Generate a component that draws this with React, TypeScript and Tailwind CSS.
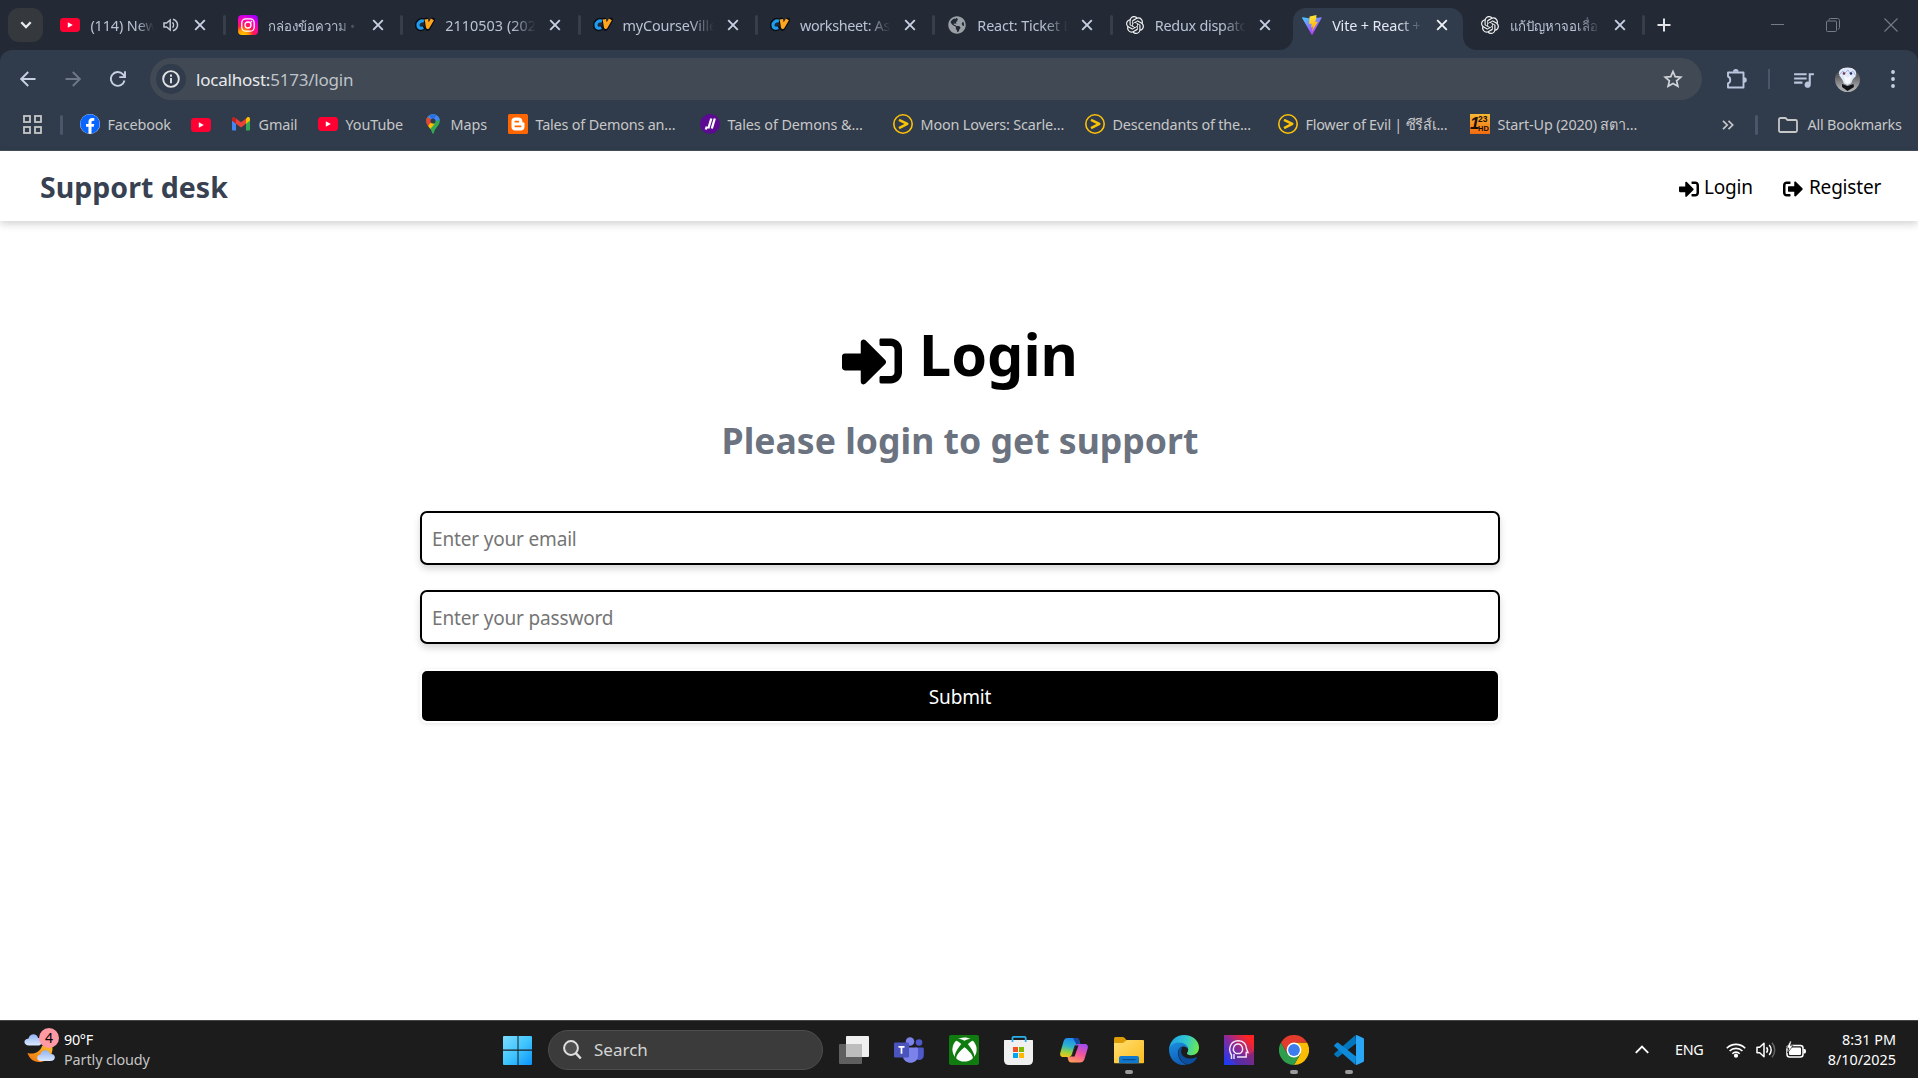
import React from "react";
import { FaFacebook, FaSignInAlt, FaSignOutAlt, FaGlobeAmericas, FaXbox } from "react-icons/fa";
import { SiOpenai } from "react-icons/si";
import { MdQueueMusic } from "react-icons/md";

const YouTubeIcon = () => (
  <svg width="20" height="20" viewBox="0 0 20 20" className="shrink-0">
    <rect x="0" y="3" width="20" height="14" rx="3.4" fill="#ff0033" />
    <path d="M7.8 7.2v5.6l5-2.8z" fill="#fff" />
  </svg>
);

const InstagramIcon = () => (
  <svg width="20" height="20" viewBox="0 0 20 20" className="shrink-0">
    <defs>
      <radialGradient id="ig" cx="0.25" cy="1.05" r="1.15">
        <stop offset="0" stopColor="#ffd600" />
        <stop offset="0.25" stopColor="#ff9a00" />
        <stop offset="0.45" stopColor="#ff1a4b" />
        <stop offset="0.72" stopColor="#ff00b8" />
        <stop offset="1" stopColor="#a200ff" />
      </radialGradient>
    </defs>
    <rect width="20" height="20" rx="4" fill="url(#ig)" />
    <rect x="3.8" y="3.8" width="12.4" height="12.4" rx="4" fill="none" stroke="#fff" strokeWidth="1.3" />
    <circle cx="10" cy="10" r="3" fill="none" stroke="#fff" strokeWidth="1.3" />
    <circle cx="13.4" cy="6.6" r="0.9" fill="#fff" />
  </svg>
);

const CvIcon = () => (
  <svg width="20" height="20" viewBox="0 0 20 20" className="shrink-0">
    <g fill="none" strokeLinejoin="round">
      <path d="M8.6 5.6C5 4.6 2.4 7 2.3 10.3c0 2.8 2.6 4 5.2 2.9M11.2 5l1.4 8.6L17.6 5" stroke="#0c0f14" strokeWidth="5" strokeLinecap="round" />
      <path d="M9 6.200C5.800 5 3 7.300 3 10.300c0 2.700 2.600 3.600 5.200 2.300" stroke="#1e9df1" strokeWidth="3.200" />
      <path d="M11.400 4.300l1.300 8L17.400 4.300" stroke="#ffa51e" strokeWidth="3.500" />
    </g>
  </svg>
);

const GlobeIcon = () => <FaGlobeAmericas size={18} color="#9aa0a6" className="shrink-0" />;
const OpenAiIcon = () => <SiOpenai size={18} color="#f1f1f1" className="shrink-0" />;

const ViteIcon = () => (
  <svg width="20" height="20" viewBox="0 0 20 20" className="shrink-0">
    <defs>
      <linearGradient id="va" x1="0" y1="0" x2="0.6" y2="1">
        <stop offset="0" stopColor="#41d1ff" />
        <stop offset="1" stopColor="#bd34fe" />
      </linearGradient>
      <linearGradient id="vb" x1="0.4" y1="0" x2="0.6" y2="1">
        <stop offset="0" stopColor="#ffea3a" />
        <stop offset="1" stopColor="#ffa200" />
      </linearGradient>
    </defs>
    <path d="M19.6 2.9L10.5 19.5c-.2.3-.7.3-.9 0L.1 2.9c-.2-.4.1-.8.5-.7L10 3.8l9.1-1.6c.4-.1.7.3.5.7z" fill="url(#va)" />
    <path d="M14.5.1L7.8 1.4c-.1 0-.2.1-.2.2l-.4 7.2c0 .2.1.3.3.3l1.9-.4c.2 0 .3.1.3.3L9.1 11.9c0 .2.1.4.3.3l1.2-.4c.2 0 .4.1.3.3l-.9 4.4 5.7-9.4c.1-.2 0-.4-.3-.4l-1.9.4c-.2 0-.4-.1-.3-.3l1.3-4.400c.1-.2-.1-.3-.3-.3z" fill="url(#vb)" />
  </svg>
);

const Cross = ({ color }: { color: string }) => (
  <svg width="12" height="12" viewBox="0 0 12 12" className="shrink-0">
    <path d="M1.2 1.2l9.6 9.6M10.8 1.2L1.2 10.8" stroke={color} strokeWidth="1.9" />
  </svg>
);

const TabSound = () => (
  <svg width="16" height="14" viewBox="0 0 16 14" fill="none" stroke="#c3c9d3" strokeWidth="1.5" className="mr-[17px] shrink-0">
    <path d="M1 5h2.600l3.600-3v10l-3.600-3H1zM9.500 4.400c1.400 1.400 1.400 3.800 0 5.200M10 1.300c6 2 6 9.400 0 11.400" />
  </svg>
);

type TabData = { icon: React.ReactNode; title: string; cls: string; active?: boolean; sound?: boolean; sep?: boolean };

const tabs: TabData[] = [
  { icon: <YouTubeIcon />, title: "(114) New", cls: "text-[14.4px] tracking-[-0.1px]", sound: true, sep: true },
  { icon: <InstagramIcon />, title: "กล่องข้อความ •", cls: "text-[13.2px]", sep: true },
  { icon: <CvIcon />, title: "2110503 (202", cls: "text-[14.4px] tracking-[0.05px]", sep: true },
  { icon: <CvIcon />, title: "myCourseVille", cls: "text-[14.4px] tracking-[-0.15px]", sep: true },
  { icon: <CvIcon />, title: "worksheet: As", cls: "text-[14.4px] tracking-[-0.35px]", sep: true },
  { icon: <GlobeIcon />, title: "React: Ticket L", cls: "text-[14.4px] tracking-[-0.15px]", sep: true },
  { icon: <OpenAiIcon />, title: "Redux dispatc", cls: "text-[14.4px] tracking-[-0.25px]" },
  { icon: <ViteIcon />, title: "Vite + React +", cls: "text-[14.4px] tracking-[-0.15px]", active: true },
  { icon: <OpenAiIcon />, title: "แก้ปัญหาจอเลื่อ", cls: "text-[13.2px]", sep: true },
];

const Flare = ({ flip }: { flip?: boolean }) => (
  <svg width="14" height="14" viewBox="0 0 14 14" className={flip ? "absolute bottom-0 -right-[14px] -scale-x-100" : "absolute bottom-0 -left-[14px]"}>
    <path d="M14 0v14H0C8 14 14 8 14 0z" fill="#303b4b" />
  </svg>
);

const Tab = ({ t }: { t: TabData }) => (
  <div className="relative flex h-full w-[177.4px] shrink-0 items-center">
    {t.active && (
      <div className="absolute top-[8px] bottom-0 left-[5px] w-[170px] rounded-t-[13px] bg-[#303b4b]">
        <Flare />
        <Flare flip />
      </div>
    )}
    <div className="relative flex w-full items-center pl-[14px]">
      <span className="flex w-[20px] justify-center">{t.icon}</span>
      <span
        className={`ml-[10px] block min-w-0 overflow-hidden pt-px leading-[24px] whitespace-nowrap ${t.sound ? "mr-[9px] w-[64px]" : "mr-[13px] w-[91px]"} [mask-image:linear-gradient(to_right,#000_74%,transparent)] ${t.active ? "text-[#e3e8f2]" : "text-[#b9c3d6]"} ${t.cls}`}
      >
        {t.title}
      </span>
      {t.sound ? (
        <span className="-mr-[2px] flex">
          <TabSound />
        </span>
      ) : null}
      <Cross color={t.active ? "#eef1f6" : "#c6d0e2"} />
    </div>
    {t.sep && <span className="absolute right-[-2px] h-[20px] w-[3px] rounded-full bg-[#383f4a]" />}
  </div>
);

const TabStrip = () => (
  <div className="flex h-[50px] items-center bg-[#232a35]">
    <div className="ml-[8px] flex h-[34px] w-[35px] items-center justify-center rounded-[11px] bg-[#35393d]">
      <svg width="12" height="8" viewBox="0 0 12 8">
        <path d="M1.3 1.3L6 6l4.7-4.7" fill="none" stroke="#e8eaed" strokeWidth="2.3" />
      </svg>
    </div>
    <div className="ml-[3.4px] flex h-full">
      {tabs.map((t) => (
        <Tab key={t.title} t={t} />
      ))}
    </div>
    <svg width="14" height="14" viewBox="0 0 14 14" className="ml-[14.5px]">
      <path d="M7 .5v13M.5 7h13" stroke="#e2e4e8" strokeWidth="2" />
    </svg>
    <div className="ml-auto flex items-center pr-[20px]">
      <svg width="13" height="13" viewBox="0 0 13 13">
        <path d="M0 5.500h13" stroke="#777c84" />
      </svg>
      <svg width="14" height="14" viewBox="0 0 14 14" fill="none" stroke="#777c84" className="ml-[42px]">
        <rect x="0.5" y="3" width="10" height="10.5" rx="1" />
        <path d="M3 2.500V1.800C3 1 3.500.5 4.200.5h7.300c1.200 0 2 .8 2 2v7c0 .8-.5 1.500-1.500 1.500" />
      </svg>
      <svg width="14" height="14" viewBox="0 0 14 14" className="ml-[44px]">
        <path d="M.5.5l13 13M13.500.5L.5 13.500" stroke="#777c84" strokeWidth="1.1" />
      </svg>
    </div>
  </div>
);

const Avatar = () => (
  <svg width="25" height="25" viewBox="0 0 25 25">
    <defs>
      <clipPath id="av">
        <circle cx="12.5" cy="12.5" r="12.5" />
      </clipPath>
      <linearGradient id="avbg" x1="0" y1="0" x2="0" y2="1">
        <stop offset="0" stopColor="#26292d" />
        <stop offset="1" stopColor="#c0c0c0" />
      </linearGradient>
    </defs>
    <g clipPath="url(#av)">
      <rect width="25" height="25" fill="url(#avbg)" />
      <path d="M6 18h13l3 7H4z" fill="#a9aaac" />
      <path d="M7 17l5.500 2 6-2 .5 3-6.500 4L7 20z" fill="#111316" />
      <path d="M4 8c-1-6 4-7.500 8.500-7.500S22.500 2 21 9L18 12l-2 4.500-3.500 1.500L9 16.500 7.500 13z" fill="#dfe7f9" />
      <path d="M9 8l3.500 3L16 8l-1 7-2.500 2L10 15z" fill="#f6f7fb" />
      <path d="M4 8l4-4 1 3 4-4 2 3 3-2 3 5" fill="none" stroke="#a3b4dc" />
      <circle cx="9" cy="6.5" r="1.3" fill="#7b2e4a" />
      <circle cx="16" cy="6.5" r="1.3" fill="#252f66" />
    </g>
  </svg>
);

const Toolbar = () => (
  <div className="bg-[#232a35]">
    <div className="flex h-[54px] items-center rounded-t-[12px] bg-[#303b4b] pt-[4px]">
      <svg width="16" height="16" viewBox="0 0 16 16" fill="none" stroke="#c6d0e2" strokeWidth="1.9" className="ml-[20px]">
        <path d="M15.500 8H1.500M8.200 1L1.200 8l7 7" />
      </svg>
      <svg width="16" height="16" viewBox="0 0 16 16" fill="none" stroke="#6d7787" strokeWidth="1.9" className="ml-[29px]">
        <path d="M.5 8h14M7.800 1l7 7-7 7" />
      </svg>
      <svg width="16" height="16" viewBox="0 0 16 16" fill="none" stroke="#c6d0e2" strokeWidth="1.9" className="ml-[29px]">
        <path d="M14.500 9.500A6.900 6.900 0 1 1 13 3.400l1.300 1.500M15 .3v5.800H9.300" />
      </svg>
      <div className="ml-[24px] flex h-[42px] w-[1552px] items-center rounded-full bg-[#404954] pl-[6px]">
        <div className="flex size-[30px] items-center justify-center rounded-full bg-[#303b4b]">
          <svg width="18" height="18" viewBox="0 0 17 17" fill="none" stroke="#e3e3e3" strokeWidth="1.8">
            <circle cx="8.5" cy="8.5" r="7.4" />
            <path d="M8.500 7.500v5M8.500 4.300v2" />
          </svg>
        </div>
        <span className="ml-[10px] pt-px text-[17px] leading-[30px] tracking-[-0.22px] text-[#bfc3c9]">
          <span className="text-[#e8eaed]">localhost:</span>5173/login
        </span>
        <svg width="20" height="20" viewBox="0 0 20 20" fill="none" stroke="#d0d3d8" strokeWidth="1.7" className="mr-[19.5px] ml-auto">
          <path d="M10 2.500l2.200 5.100 5.600.5-4.200 3.700 1.300 5.500-4.900-2.900-4.900 2.900 1.300-5.500L2.200 8.100l5.600-.5z" />
        </svg>
      </div>
      <svg width="22" height="21" viewBox="0 0 22 21" fill="none" stroke="#b9c6de" strokeWidth="1.9" className="ml-[24px]">
        <path d="M2 3.500h15.500v15H2v-4c3-1 3-6 0-7z" strokeLinejoin="round" />
        <path d="M7 2.800a2.800 2.800 0 0 1 5.600 0M18 8.200a2.800 2.800 0 0 1 0 5.600" fill="#b9c6de" stroke="none" />
      </svg>
      <span className="ml-[20px] h-[20px] w-[2px] bg-[#4a566a]" />
      <MdQueueMusic size={25} color="#b9c6de" className="ml-[21px]" />
      <span className="ml-[19px]">
        <Avatar />
      </span>
      <svg width="4" height="18" viewBox="0 0 4 18" fill="#c6d0e2" className="ml-[30.500px]">
        <circle cx="2" cy="2" r="1.9" />
        <circle cx="2" cy="9" r="1.9" />
        <circle cx="2" cy="16" r="1.9" />
      </svg>
    </div>
  </div>
);

const GmailIcon = () => (
  <svg width="20" height="20" viewBox="0 0 20 20">
    <path d="M1 5v10.300c0 .8.5 1.200 1.200 1.200H5V9z" fill="#4285f4" />
    <path d="M19 5v10.300c0 .8-.5 1.200-1.200 1.200H15V9z" fill="#34a853" />
    <path d="M15 4.500V9.700l4-3V5c0-2-2-2.500-3-1.500z" fill="#fbbc04" />
    <path d="M5 9.700V4.500L10 8.200l5-3.700v5.200l-5 3.700z" fill="#ea4335" />
    <path d="M1 5v1.700l4 3V4.500L4 3.500C3 2.500 1 3 1 5z" fill="#c5221f" />
  </svg>
);

const MapsIcon = () => (
  <svg width="20" height="20" viewBox="0 0 20 20">
    <defs>
      <clipPath id="pin">
        <path d="M10 .3c-3.900 0-6.800 3-6.800 6.700 0 4.600 4.600 6.300 6 12 .2.900 1.400.9 1.600 0 1.400-5.700 6-7.400 6-12 0-3.700-2.900-6.700-6.800-6.700z" />
      </clipPath>
    </defs>
    <g clipPath="url(#pin)">
      <rect width="20" height="20" fill="#34a853" />
      <path d="M0 0h20v6L10 7 4.500 2.500z" fill="#4285f4" />
      <path d="M0 0l10 7-6 7H0z" fill="#ea4335" />
      <path d="M14 0h-9l5 6z" fill="#2b6fe0" />
      <path d="M4 13l4-4.500 3.500 1.500-5 6z" fill="#fbbc04" />
    </g>
    <circle cx="10" cy="7" r="2.5" fill="#303b4b" />
  </svg>
);

const BloggerIcon = () => (
  <svg width="20" height="20" viewBox="0 0 20 20">
    <rect width="20" height="20" rx="1.5" fill="#ff6600" />
    <path d="M7 3.500h3.500c2.300 0 3.800 1.400 3.800 3.500 0 1.300.3 1.500 1.200 1.500.7 0 1 .4 1 1V13c0 2-1.500 3.500-3.500 3.500H7c-2 0-3.500-1.500-3.500-3.500V7C3.500 5 5 3.500 7 3.500z" fill="#fff" />
    <path d="M7.300 7.700h3M7.300 12.300h5.400" stroke="#ff6600" strokeWidth="1.7" strokeLinecap="round" />
  </svg>
);

const PurpleIcon = () => (
  <svg width="20" height="20" viewBox="0 0 20 20">
    <circle cx="10" cy="10" r="10" fill="#5b0a91" />
    <path d="M11.300 4.500L8.300 14.500M14.800 4.500L11.800 14.500M6.800 12.500l-1 3" stroke="#fff" strokeWidth="2.300" fill="none" />
  </svg>
);

const ViuIcon = () => (
  <svg width="20" height="20" viewBox="0 0 20 20" fill="none" stroke="#fbc108">
    <circle cx="10" cy="10" r="9.2" strokeWidth="1.6" />
    <path d="M6 5.800l8.300 4-8.300 4.400" strokeWidth="2.6" strokeLinejoin="round" />
  </svg>
);

const HdIcon = () => (
  <span className="flex size-[20px] overflow-hidden bg-linear-to-b from-[#f7b733] to-[#f06a10] font-['Liberation_Sans'] font-bold text-[#1a0d02]">
    <span className="w-[8px] text-[17px] leading-[20px] italic">1</span>
    <span className="flex w-[12px] flex-col pt-[1px] text-[8.500px] leading-[9px]">
      <span>23</span>
      <span className="text-[7.500px]">HD</span>
    </span>
  </span>
);

const Facebook = () => (
  <span className="block rounded-full bg-white">
    <FaFacebook size={20} color="#0866ff" />
  </span>
);

const bookmarks = [
  { icon: <Facebook />, label: "Facebook", w: "w-[111px]", t: "tracking-[-0.15px]" },
  { icon: <YouTubeIcon />, label: "", w: "w-[40px]", t: "" },
  { icon: <GmailIcon />, label: "Gmail", w: "w-[87px]", t: "tracking-[-0.1px]" },
  { icon: <YouTubeIcon />, label: "YouTube", w: "w-[105px]", t: "tracking-[-0.1px]" },
  { icon: <MapsIcon />, label: "Maps", w: "w-[85px]", t: "tracking-[-0.1px]" },
  { icon: <BloggerIcon />, label: "Tales of Demons an...", w: "w-[192px]", t: "tracking-[-0.18px]" },
  { icon: <PurpleIcon />, label: "Tales of Demons &...", w: "w-[193px]", t: "tracking-[-0.1px]" },
  { icon: <ViuIcon />, label: "Moon Lovers: Scarle...", w: "w-[192px]", t: "tracking-[-0.16px]" },
  { icon: <ViuIcon />, label: "Descendants of the...", w: "w-[193px]", t: "tracking-[-0.18px]" },
  { icon: <ViuIcon />, label: "Flower of Evil | ซีรีส์เ...", w: "w-[192px]", t: "tracking-[-0.25px]" },
  { icon: <HdIcon />, label: "Start-Up (2020) สตา...", w: "w-[200px]", t: "tracking-[-0.15px]" },
];

const BookmarksBar = () => (
  <div className="flex h-[47px] items-center border-b border-[#474f5b] bg-[#303b4b] pb-[5px] text-[14.4px] text-[#c7c7c7]">
    <svg width="19" height="19" viewBox="0 0 19 19" fill="none" stroke="#c7c7c7" strokeWidth="1.8" className="ml-[23px]">
      <rect x="1" y="1" width="6" height="6" />
      <rect x="12" y="1" width="6" height="6" />
      <rect x="1" y="12" width="6" height="6" />
      <rect x="12" y="12" width="6" height="6" />
    </svg>
    <span className="mr-[17px] ml-[18px] h-[20px] w-[3px] rounded-full bg-[#4a566a]" />
    {bookmarks.map((b, i) => (
      <div key={i} className={`flex shrink-0 items-center gap-[7.5px] whitespace-nowrap ${b.w}`}>
        <span className="w-[20px] shrink-0">{b.icon}</span>
        <span className={b.t}>{b.label}</span>
      </div>
    ))}
    <svg width="12" height="10" viewBox="0 0 12 10" fill="none" stroke="#c7c7c7" strokeWidth="1.7" className="ml-auto">
      <path d="M1 .8L5.200 5 1 9.200M6.500.8L10.700 5 6.500 9.200" />
    </svg>
    <span className="ml-[21px] h-[20px] w-[3px] rounded-full bg-[#4a566a]" />
    <svg width="20" height="16" viewBox="0 0 20 16" fill="none" stroke="#c7c7c7" strokeWidth="1.8" strokeLinejoin="round" className="ml-[20px]">
      <path d="M1 13.500V2.500C1 1.600 1.600 1 2.500 1H7.500l2 2h8c.9 0 1.500.6 1.500 1.500v9c0 .9-.6 1.500-1.500 1.500h-15C1.600 15 1 14.400 1 13.500z" />
    </svg>
    <span className="mr-[15.500px] ml-[10px] w-[95px] whitespace-nowrap tracking-[-0.2px]">All Bookmarks</span>
  </div>
);

const LoginPage = () => (
  <div className="flex flex-1 flex-col bg-white text-black">
    <header className="flex h-[70px] items-center justify-between bg-white pr-[38px] pl-[40px] shadow-[0_3px_8px_rgba(0,0,0,0.18)]">
      <span className="pt-[3px] text-[28.5px] font-bold tracking-[0.02px] whitespace-nowrap text-[#374151]">Support desk</span>
      <nav className="flex items-center text-[19px] tracking-[-0.2px] whitespace-nowrap">
        <span className="flex items-center">
          <FaSignInAlt size={20} className="mt-[6px] mr-[5px]" />
          <span className="w-[50px] pt-[2px]">Login</span>
        </span>
        <span className="ml-[29px] flex items-center">
          <FaSignOutAlt size={20} className="mt-[6px] mr-[6px]" />
          <span className="w-[71px] pt-[2px]">Register</span>
        </span>
      </nav>
    </header>
    <main className="ml-[420px] flex w-[1080px] flex-col">
      <h1 className="mt-[93px] flex h-[80px] items-center justify-center text-[57.5px] font-bold whitespace-nowrap">
        <FaSignInAlt size={60} className="mt-[13px] mr-[17px]" />
        <span>Login</span>
      </h1>
      <p className="mt-[21px] h-[50px] text-center text-[35.6px] leading-[51px] font-bold whitespace-nowrap text-[#6b7280]">
        Please login to get support
      </p>
      <form className="mt-[46px] flex flex-col text-[19px] tracking-[-0.17px]">
        <input
          placeholder="Enter your email"
          className="h-[54px] rounded-[7px] border-2 border-black px-[10px] pt-[2px] shadow-[0_4px_7px_rgba(0,0,0,0.16)] placeholder:text-[#757575]"
        />
        <input
          placeholder="Enter your password"
          className="mt-[25px] h-[54px] rounded-[7px] border-2 border-black px-[10px] pt-[2px] shadow-[0_4px_7px_rgba(0,0,0,0.16)] placeholder:text-[#757575]"
        />
        <button type="button" className="mt-[25px] h-[54px] rounded-[7px] border-2 border-white bg-black pt-[2px] text-white shadow-[0_1px_4px_rgba(0,0,0,0.1)]">
          Submit
        </button>
      </form>
    </main>
  </div>
);

const Weather = () => (
  <div className="relative h-[36px] w-[35px]">
    <svg width="35" height="36" viewBox="0 0 35 36">
      <defs>
        <linearGradient id="cl" x1="0" y1="0" x2="0" y2="1">
          <stop offset="0" stopColor="#8fb4f3" />
          <stop offset="1" stopColor="#dce8fd" />
        </linearGradient>
        <linearGradient id="mn" x1="1" y1="0" x2="0" y2="1">
          <stop offset="0" stopColor="#fbc02d" />
          <stop offset="1" stopColor="#f0700e" />
        </linearGradient>
      </defs>
      <path d="M28 17c2 7-2 17-13 17C9 34 5 30 3.500 25 10 27 16 24 18 18z" fill="url(#mn)" />
      <path d="M5 17.500c-6 0-6-6.500-.5-7C6 5 13 5 14 10c4-1 5 7.500 1 7.500z" fill="url(#cl)" />
      <path d="M17 33c-5 0-5-6-.5-6.500C18 21 25 21 26 26c6-1 7 7 0 7z" fill="url(#cl)" />
    </svg>
    <span className="absolute top-0 left-[15px] size-[20px] rounded-full bg-[#ff99a4] text-center text-[14px] leading-[20px] text-black">4</span>
  </div>
);

const WindowsLogo = () => (
  <svg width="30" height="30" viewBox="0 0 30 30">
    <defs>
      <linearGradient id="win" gradientUnits="userSpaceOnUse" x1="0" y1="0" x2="30" y2="30">
        <stop offset="0" stopColor="#7fdcff" />
        <stop offset="0.5" stopColor="#41c6ff" />
        <stop offset="1" stopColor="#0a93f8" />
      </linearGradient>
    </defs>
    <path d="M1 1h13.500v13.500H0V2q0-1 1-1zM15.500 1H28q1 0 1 1v12.500H15.500zM0 15.700h14.500V30H1q-1 0-1-1zM15.500 15.700H29V29q0 1-1 1H15.500z" fill="url(#win)" />
  </svg>
);

const TaskView = () => (
  <svg width="30" height="30" viewBox="0 0 30 30">
    <rect x="0" y="9" width="23" height="20" rx="1" fill="#5f5f5f" />
    <rect x="7" y="1" width="23" height="21" rx="1" fill="#f0f0f0" />
    <path d="M7 9h16v13H8q-1 0-1-1z" fill="#bdbdbd" />
  </svg>
);

const Teams = () => (
  <svg width="30" height="30" viewBox="0 0 30 30">
    <circle cx="25" cy="7.5" r="3.3" fill="#5059c9" />
    <path d="M21 12.500h7.500q1.300 0 1.300 1.300v6c0 6-6 6-8 4z" fill="#5059c9" />
    <circle cx="16" cy="6.5" r="4.3" fill="#7b83eb" />
    <path d="M9 12.500h13.500q1.500 0 1.500 1.500v7c0 9-15 9-15 0z" fill="#7b83eb" />
    <rect x="0" y="7.5" width="15" height="15" rx="1.3" fill="#4b53bc" />
    <path d="M4.500 11.800h6M7.500 11.800v7" stroke="#fff" strokeWidth="1.7" />
  </svg>
);

const Xbox = () => (
  <span className="flex size-[30px] items-center justify-center rounded-[2px] bg-[#107c10]">
    <FaXbox size={25} color="#fff" />
  </span>
);

const Store = () => (
  <svg width="30" height="30" viewBox="0 0 30 30">
    <path d="M8.500 8V3q0-1.200 1.200-1.200h10.800q1.200 0 1.200 1.200V8" fill="none" stroke="#2bb0ea" strokeWidth="1.8" />
    <path d="M.5 5H28.500q.5 0 .5.500V25q0 5-5 5H5q-5 0-5-5V5.500q0-.5.500-.5z" fill="#f0f0f0" />
    <path d="M8.500 5v2M21.700 5v2" stroke="#2bb0ea" strokeWidth="1.8" />
    <path d="M9 12h5v5H9z" fill="#f25022" />
    <path d="M15 12h5v5h-5z" fill="#7fba00" />
    <path d="M9 18h5v5H9z" fill="#00a4ef" />
    <path d="M15 18h5v5h-5z" fill="#ffb900" />
  </svg>
);

const Copilot = () => (
  <svg width="30" height="30" viewBox="0 0 30 30">
    <defs>
      <linearGradient id="cpa" x1="0.5" y1="0" x2="0.3" y2="1">
        <stop offset="0" stopColor="#1b8bf0" />
        <stop offset="0.45" stopColor="#2fb5c8" />
        <stop offset="0.75" stopColor="#9bd13c" />
        <stop offset="1" stopColor="#f2c41c" />
      </linearGradient>
      <linearGradient id="cpb" x1="0.7" y1="0" x2="0.3" y2="1">
        <stop offset="0" stopColor="#a04df0" />
        <stop offset="0.5" stopColor="#f2559c" />
        <stop offset="1" stopColor="#ff9a5a" />
      </linearGradient>
    </defs>
    <path d="M8.500 3H17c2.500 0 3 1.500 3.500 3.500l1 3h-3c-2 0-3 1-3.500 3L13 19c-.7 2.500-2 3-4 3H4.500C1.500 22 .5 20 1.500 17L4.500 6.500C5.200 4 6.500 3 8.500 3z" fill="url(#cpa)" />
    <path d="M14 3h4c1.500 0 2 1.500 2.500 3.500l1 3h-4z" fill="#1746a8" />
    <path d="M21 27.500h-8.500c-2.500 0-3-1.500-3.500-3.500l-.6-2h2c2 0 2.600-1 3.100-3L16 12c.7-2.500 2-3 4-3h5.500c3 0 4 2 3 5L25.500 24c-.7 2.500-2.500 3.500-4.500 3.500z" fill="url(#cpb)" />
    <path d="M16.500 10.500h3l-4 11h-3z" fill="#1c1c1c" />
  </svg>
);

const Explorer = () => (
  <svg width="30" height="30" viewBox="0 0 30 30">
    <defs>
      <linearGradient id="fo" x1="0" y1="0" x2="1" y2="1">
        <stop offset="0" stopColor="#ffdf72" />
        <stop offset="1" stopColor="#fdbb1c" />
      </linearGradient>
    </defs>
    <path d="M0 3.500Q0 2 1.500 2h7.300q.8 0 1.400.6L12.500 5v6H0z" fill="#dd9c05" />
    <path d="M0 8h8.500q1 0 1.600-.7l1.500-1.600q.6-.7 1.600-.7H29q1 0 1 1v21.500q0 .8-.8.8H.8q-.8 0-.8-.8z" fill="url(#fo)" />
    <path d="M5 28.300V23q0-2 2-2h16q2 0 2 2v5.300z" fill="#0f78d0" />
    <path d="M9 24.700h12" stroke="#0a4f8c" strokeWidth="1.3" strokeLinecap="round" />
  </svg>
);

const Edge = () => (
  <svg width="30" height="30" viewBox="0 0 30 30">
    <defs>
      <linearGradient id="ea" x1="0" y1="0.3" x2="1" y2="0.5">
        <stop offset="0" stopColor="#1f9fe6" />
        <stop offset="0.55" stopColor="#33c8cf" />
        <stop offset="1" stopColor="#6be84e" />
      </linearGradient>
      <linearGradient id="eb" x1="0" y1="0" x2="0.3" y2="1">
        <stop offset="0" stopColor="#1b8fdf" />
        <stop offset="1" stopColor="#0f5fb8" />
      </linearGradient>
    </defs>
    <path d="M0 14.500C.5 6 7 0 15 0c9 0 15 6 15 12.500 0 5-3.500 7.700-7.500 7.700-3.500 0-4.500-1.200-4.500-2 0-.7 1.200-1.500 1.200-3.700 0-3-3.200-5.500-7.200-5.500-6 0-10 3-12 5.500z" fill="url(#ea)" />
    <path d="M0 14.500C1 10 5.500 7.500 10 7.500c5.500 0 9 3.300 9 6.500 0 0-1.500-2.500-5-2.500-3 0-5 3-5 6.500 0 6 5 11 9 11.500C8 32 0 24.500 0 14.500z" fill="url(#eb)" />
    <path d="M9.800 14.500C8 20 11.500 27.500 18.500 29.600c4-.7 7.500-3 9.300-6.600.3-.5-.2-.9-.7-.7-6 3-15 .7-15-5.800 0-2 .6-3.500 1.400-4.500-1.500.2-3 1-3.700 2.500z" fill="#0c4fa0" />
  </svg>
);

const HeadApp = () => (
  <svg width="30" height="30" viewBox="0 0 30 30">
    <defs>
      <linearGradient id="ha" x1="0" y1="1" x2="1" y2="0">
        <stop offset="0" stopColor="#0d3cff" />
        <stop offset="0.5" stopColor="#8a2a9a" />
        <stop offset="0.85" stopColor="#ff2424" />
        <stop offset="1" stopColor="#ff2424" />
      </linearGradient>
    </defs>
    <rect width="30" height="30" fill="url(#ha)" />
    <path d="M8 24l3-8 12 6 7-6v14H13z" fill="#552a88" opacity="0.5" />
    <g fill="none" stroke="#f4e8f6" strokeWidth="1.4">
      <path d="M7.500 24v-4c-4-6-1-14 6.500-14.200 6-.2 8.500 4 8.500 8l1.500 3.700h-1.800V22H13" />
      <path d="M10 24v-5M12 18.500c-5-3-2-9.500 2-9.500s7 6 2 9.500z" />
    </g>
  </svg>
);

const Chrome = () => (
  <svg width="30" height="30" viewBox="0 0 30 30">
    <path d="M28 7.500A15 15 0 0 1 15 30l6.500-11.200L15 7.500z" fill="#fbbc04" />
    <path d="M15 30A15 15 0 0 1 2 7.500l6.500 11.300L15 22l6.500-3.200z" fill="#2f9e4c" />
    <path d="M15 7.500h13A15 15 0 0 0 2 7.500l6.500 11z" fill="#e33b2e" />
    <circle cx="15" cy="15" r="7.4" fill="#fff" />
    <circle cx="15" cy="15" r="5.9" fill="#3b7ded" />
  </svg>
);

const VsCode = () => (
  <svg width="30" height="30" viewBox="0 0 30 30">
    <path d="M22 8.500L4.300 22q-.8.600-1.500 0L.6 20q-.9-.9 0-1.800L21.500 0z" fill="#0277bd" />
    <path d="M22 21.500L4.300 7.800q-.8-.6-1.500 0L.6 9.700q-.9.900 0 1.800L21.500 30z" fill="#0e8ad8" />
    <path d="M22 .3q.6-.4 1.200-.1l6 2.800q.8.400.8 1.200v21.600q0 .8-.8 1.200l-6 2.800q-.8.300-1.400-.2.200 0 .2-.8z" fill="#29a6f5" />
  </svg>
);

const apps = [
  { icon: <TaskView />, open: false },
  { icon: <Teams />, open: false },
  { icon: <Xbox />, open: false },
  { icon: <Store />, open: false },
  { icon: <Copilot />, open: false },
  { icon: <Explorer />, open: true },
  { icon: <Edge />, open: false },
  { icon: <HeadApp />, open: false },
  { icon: <Chrome />, open: true },
  { icon: <VsCode />, open: true },
];

const Taskbar = () => (
  <footer className="flex h-[58px] shrink-0 items-center border-t border-[#444747] bg-[#1c1c1c] text-[14.4px] whitespace-nowrap text-white">
    <div className="flex w-[502.5px] items-center pl-[24px]">
      <div className="mb-[8px]">
        <Weather />
      </div>
      <div className="ml-[5px] leading-[20px]">
        <div className="tracking-[-0.3px]">90°F</div>
        <div className="tracking-[-0.1px] text-[#c4c4c4]">Partly cloudy</div>
      </div>
    </div>
    <WindowsLogo />
    <div className="ml-[15.5px] flex h-[40px] w-[275px] items-center rounded-full border border-[#4d4d4d] bg-[#3b3b3b] pl-[14px]">
      <svg width="19" height="20" viewBox="0 0 19 20" fill="none" stroke="#e0e0e0">
        <circle cx="8" cy="8" r="6.9" strokeWidth="2" fill="#505050" />
        <path d="M12.800 13.200l5 5.300" strokeWidth="2.5" />
      </svg>
      <span className="ml-[12px] pt-px text-[17px] text-[#d4d4d4]">Search</span>
    </div>
    <div className="flex gap-[25px] pl-[16px]">
      {apps.map((a, i) => (
        <div key={i} className="relative size-[30px]">
          {a.icon}
          {a.open && <span className="absolute -bottom-[9px] left-[11px] h-[4px] w-[8px] rounded-full bg-[#9a9a9a]" />}
        </div>
      ))}
    </div>
    <div className="ml-auto flex items-center pr-[22px]">
      <svg width="14" height="9" viewBox="0 0 14 9" fill="none" stroke="#fff" strokeWidth="1.9">
        <path d="M.8 7.800L7 1.500l6.200 6.300" />
      </svg>
      <span className="ml-[26px] w-[29px] tracking-[-0.3px]">ENG</span>
      <svg width="20" height="16" viewBox="0 0 20 16" fill="none" stroke="#fff" strokeWidth="1.6" className="ml-[22px]">
        <path d="M.8 6.200a13 13 0 0 1 18.400 0M3.600 9a9 9 0 0 1 12.800 0M6.300 11.700a5.200 5.200 0 0 1 7.400 0" />
        <circle cx="10" cy="13.7" r="1.3" fill="#fff" />
      </svg>
      <svg width="20" height="18" viewBox="0 0 20 18" fill="none" stroke="#fff" strokeWidth="1.5" className="ml-[10px]">
        <path d="M1 6.300h2.700L8 2.300v13.400l-4.300-4H1z" strokeLinejoin="round" />
        <path d="M10.500 6.300c1.200 1.500 1.200 3.900 0 5.400M13.200 4c2.600 2.900 2.600 7.100 0 10" />
        <path d="M16 1.800c3.600 4.200 3.600 10.200 0 14.400" stroke="#666" />
      </svg>
      <svg width="20" height="18" viewBox="0 0 20 18" className="ml-[10px]">
        <rect x="1" y="4.5" width="16" height="11.5" rx="2.5" fill="none" stroke="#fff" strokeWidth="1.5" />
        <rect x="3" y="6.500" width="12" height="7.500" rx="1" fill="#fff" />
        <path d="M17.500 8h1.200q1.300 0 1.300 2.200t-1.300 2.200h-1.200z" fill="#fff" />
        <path d="M4 0L.5 7h2.300L1.500 12 7 4.800H4.500L5.500 0z" fill="#fff" stroke="#1c1c1c" strokeWidth="0.7" />
      </svg>
      <div className="ml-[20px] w-[70px] text-right leading-[20px]">
        <div>8:31 PM</div>
        <div>8/10/2025</div>
      </div>
    </div>
  </footer>
);

export default function App() {
  return (
    <div className="flex h-[1078px] w-[1918px] flex-col overflow-hidden bg-white font-['Noto_Sans','Open_Sans',sans-serif]">
      <TabStrip />
      <Toolbar />
      <BookmarksBar />
      <LoginPage />
      <Taskbar />
    </div>
  );
}
